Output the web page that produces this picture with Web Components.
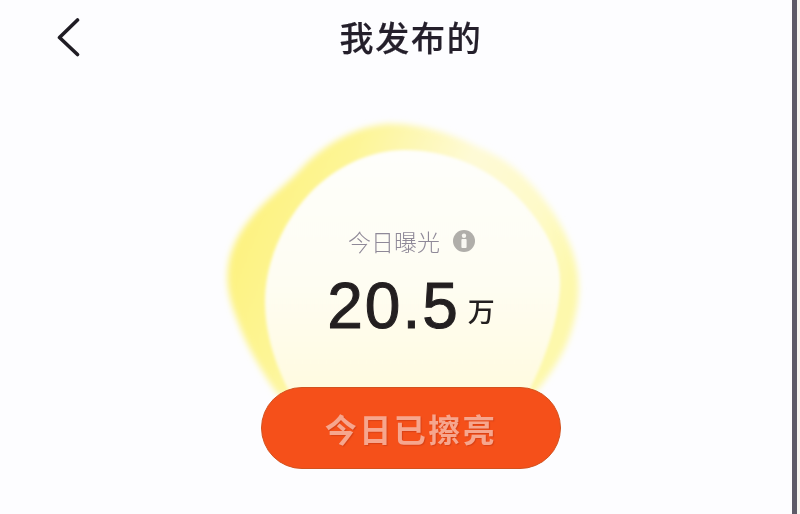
<!DOCTYPE html>
<html lang="zh">
<head>
<meta charset="utf-8">
<title>我发布的</title>
<style>
  html, body { margin: 0; height: 100%; background: #fdfdff; }
</style>
</head>
<body>
<app-screen>
  <nav-bar>我发布的</nav-bar>
  <exposure-orb label="今日曝光" value="20.5" unit="万"></exposure-orb>
  <shine-button>今日已擦亮</shine-button>
</app-screen>

<script>
const CJK = '"Noto Sans CJK SC", "Noto Sans", sans-serif';

class AppScreen extends HTMLElement {
  constructor() {
    super();
    this.attachShadow({ mode: "open" });
    this.shadowRoot.innerHTML = `
      <style>
        :host {
          display: flex;
          width: 800px;
          height: 514px;
          overflow: hidden;
          background: #fdfdff;
          font-family: ${CJK};
        }
        .page {
          flex: 1;
          display: flex;
          flex-direction: column;
          align-items: center;
          padding-left: 30px;
        }
        .edge {
          width: 5px;
          background: #5d5a68;
          filter: blur(0.6px);
        }
        .gutter { width: 3px; background: #f6f5f0; }
      </style>
      <div class="page"><slot></slot></div>
      <div class="edge"></div>
      <div class="gutter"></div>
    `;
  }
}

class NavBar extends HTMLElement {
  constructor() {
    super();
    this.attachShadow({ mode: "open" });
    this.shadowRoot.innerHTML = `
      <style>
        :host {
          display: block;
          position: relative;
          align-self: stretch;
          height: 75px;
        }
        .title {
          height: 73px;
          display: flex;
          align-items: center;
          justify-content: center;
          font-size: 34px;
          font-weight: 500;
          letter-spacing: 1.8px;
          color: #241f2b;
          -webkit-text-stroke: 0.2px #241f2b;
          filter: blur(0.5px);
        }
        /* back arrow sits over the title row */
        svg { position: absolute; left: 26px; top: 16px; filter: blur(0.3px); }
      </style>
      <svg width="26" height="44" viewBox="0 0 26 44" fill="none">
        <path d="M21.5 4 L3.5 21.5 L21.5 38.5" stroke="#1f1c24" stroke-width="3.6" stroke-linecap="round" stroke-linejoin="round"/>
      </svg>
      <div class="title"><slot></slot></div>
    `;
  }
}

class ExposureOrb extends HTMLElement {
  constructor() {
    super();
    this.attachShadow({ mode: "open" });
  }

  connectedCallback() {
    this.render();
  }

  render() {
    const label = this.getAttribute("label");
    const value = this.getAttribute("value");
    const unit = this.getAttribute("unit");
    this.shadowRoot.innerHTML = `
      <style>
        :host {
          display: block;
          position: relative;
          width: 380px;
          height: 277px;
          margin-top: 35px;
        }
        svg.blob { position: absolute; left: 0; top: 0; overflow: visible; }
        .content {
          position: relative;
          display: flex;
          flex-direction: column;
          align-items: center;
          padding-top: 113px;
        }
        .label {
          display: flex;
          align-items: center;
          gap: 12px;
          height: 36px;
          margin-left: 2px;
          font-size: 23px;
          font-weight: 300;
          color: #8f8998;
          filter: blur(0.5px);
        }
        .info { display: block; }
        .amount {
          display: flex;
          align-items: flex-end;
          gap: 8px;
          margin-top: 9px;
          color: #231f20;
          filter: blur(0.35px);
        }
        .value {
          font-family: "Liberation Sans", Arial, sans-serif;
          font-size: 64px;
          line-height: 76px;
          letter-spacing: 2px;
          -webkit-text-stroke: 1px #231f20;
        }
        .unit { font-size: 27px; line-height: 27px; margin-bottom: 20px; font-weight: 500; }
      </style>
      <svg class="blob" width="380" height="300" viewBox="221 110 380 300" fill="none">
        <defs>
          <linearGradient id="rim" x1="0" y1="0.2" x2="1" y2="0.5">
            <stop offset="0" stop-color="#fdf178"/>
            <stop offset="0.3" stop-color="#fdf596"/>
            <stop offset="0.62" stop-color="#fefad6"/>
            <stop offset="0.85" stop-color="#fefac8"/>
            <stop offset="1" stop-color="#fdf8ac"/>
          </linearGradient>
          <linearGradient id="core" x1="0" y1="0" x2="0" y2="1">
            <stop offset="0" stop-color="#fefefb"/>
            <stop offset="0.55" stop-color="#fefdf2"/>
            <stop offset="1" stop-color="#fffbdf"/>
          </linearGradient>
          <filter id="soft" x="-10%" y="-10%" width="120%" height="120%"><feGaussianBlur stdDeviation="3"/></filter>
          <filter id="softer" x="-10%" y="-10%" width="120%" height="120%"><feGaussianBlur stdDeviation="1.8"/></filter>
        </defs>
        <path filter="url(#soft)" fill="url(#rim)" d="M278 395 C262 372 246 345 238 322 C230 302 226 286 228 268 C230 248 240 230 256 212 C270 196 285 186 300 170 C320 148 350 128 385 124 C420 122 460 136 500 158 C530 176 560 215 572 250 C582 280 580 305 570 335 C562 358 548 378 533 395 Z"/>
        <path filter="url(#softer)" fill="url(#core)" d="M291 395 C278 370 266 340 265 305 C264 268 280 225 310 193 C335 167 370 150 405 150 C450 150 495 170 525 205 C548 232 561 258 560 285 C559 320 545 360 527 395 Z"/>
      </svg>
      <div class="content">
        <div class="label">
          <span>${label}</span>
          <svg class="info" width="24" height="24" viewBox="0 0 24 24">
            <circle cx="12" cy="12" r="11" fill="#b0aeaa"/>
            <rect x="9.4" y="10" width="5.2" height="9" rx="1" fill="#f8f7f2"/>
            <circle cx="12" cy="6.8" r="2.2" fill="#f8f7f2"/>
          </svg>
        </div>
        <div class="amount">
          <span class="value">${value}</span>
          <span class="unit">${unit}</span>
        </div>
      </div>
    `;
  }
}

class ShineButton extends HTMLElement {
  constructor() {
    super();
    this.attachShadow({ mode: "open" });
    this.shadowRoot.innerHTML = `
      <style>
        :host {
          display: flex;
          position: relative;
          align-items: center;
          justify-content: center;
          width: 300px;
          height: 82px;
          box-sizing: border-box;
          border-radius: 41px;
          border: 1px solid #d2521f;
          background: #f5501a;
          font-size: 32px;
          font-weight: 700;
          letter-spacing: 2.5px;
          color: #f6a68e;
        }
        span { filter: blur(0.5px); text-shadow: 1px 1px 1px rgba(205, 60, 20, .7); }
      </style>
      <span><slot></slot></span>
    `;
  }
}

customElements.define("app-screen", AppScreen);
customElements.define("nav-bar", NavBar);
customElements.define("exposure-orb", ExposureOrb);
customElements.define("shine-button", ShineButton);
</script>
</body>
</html>
